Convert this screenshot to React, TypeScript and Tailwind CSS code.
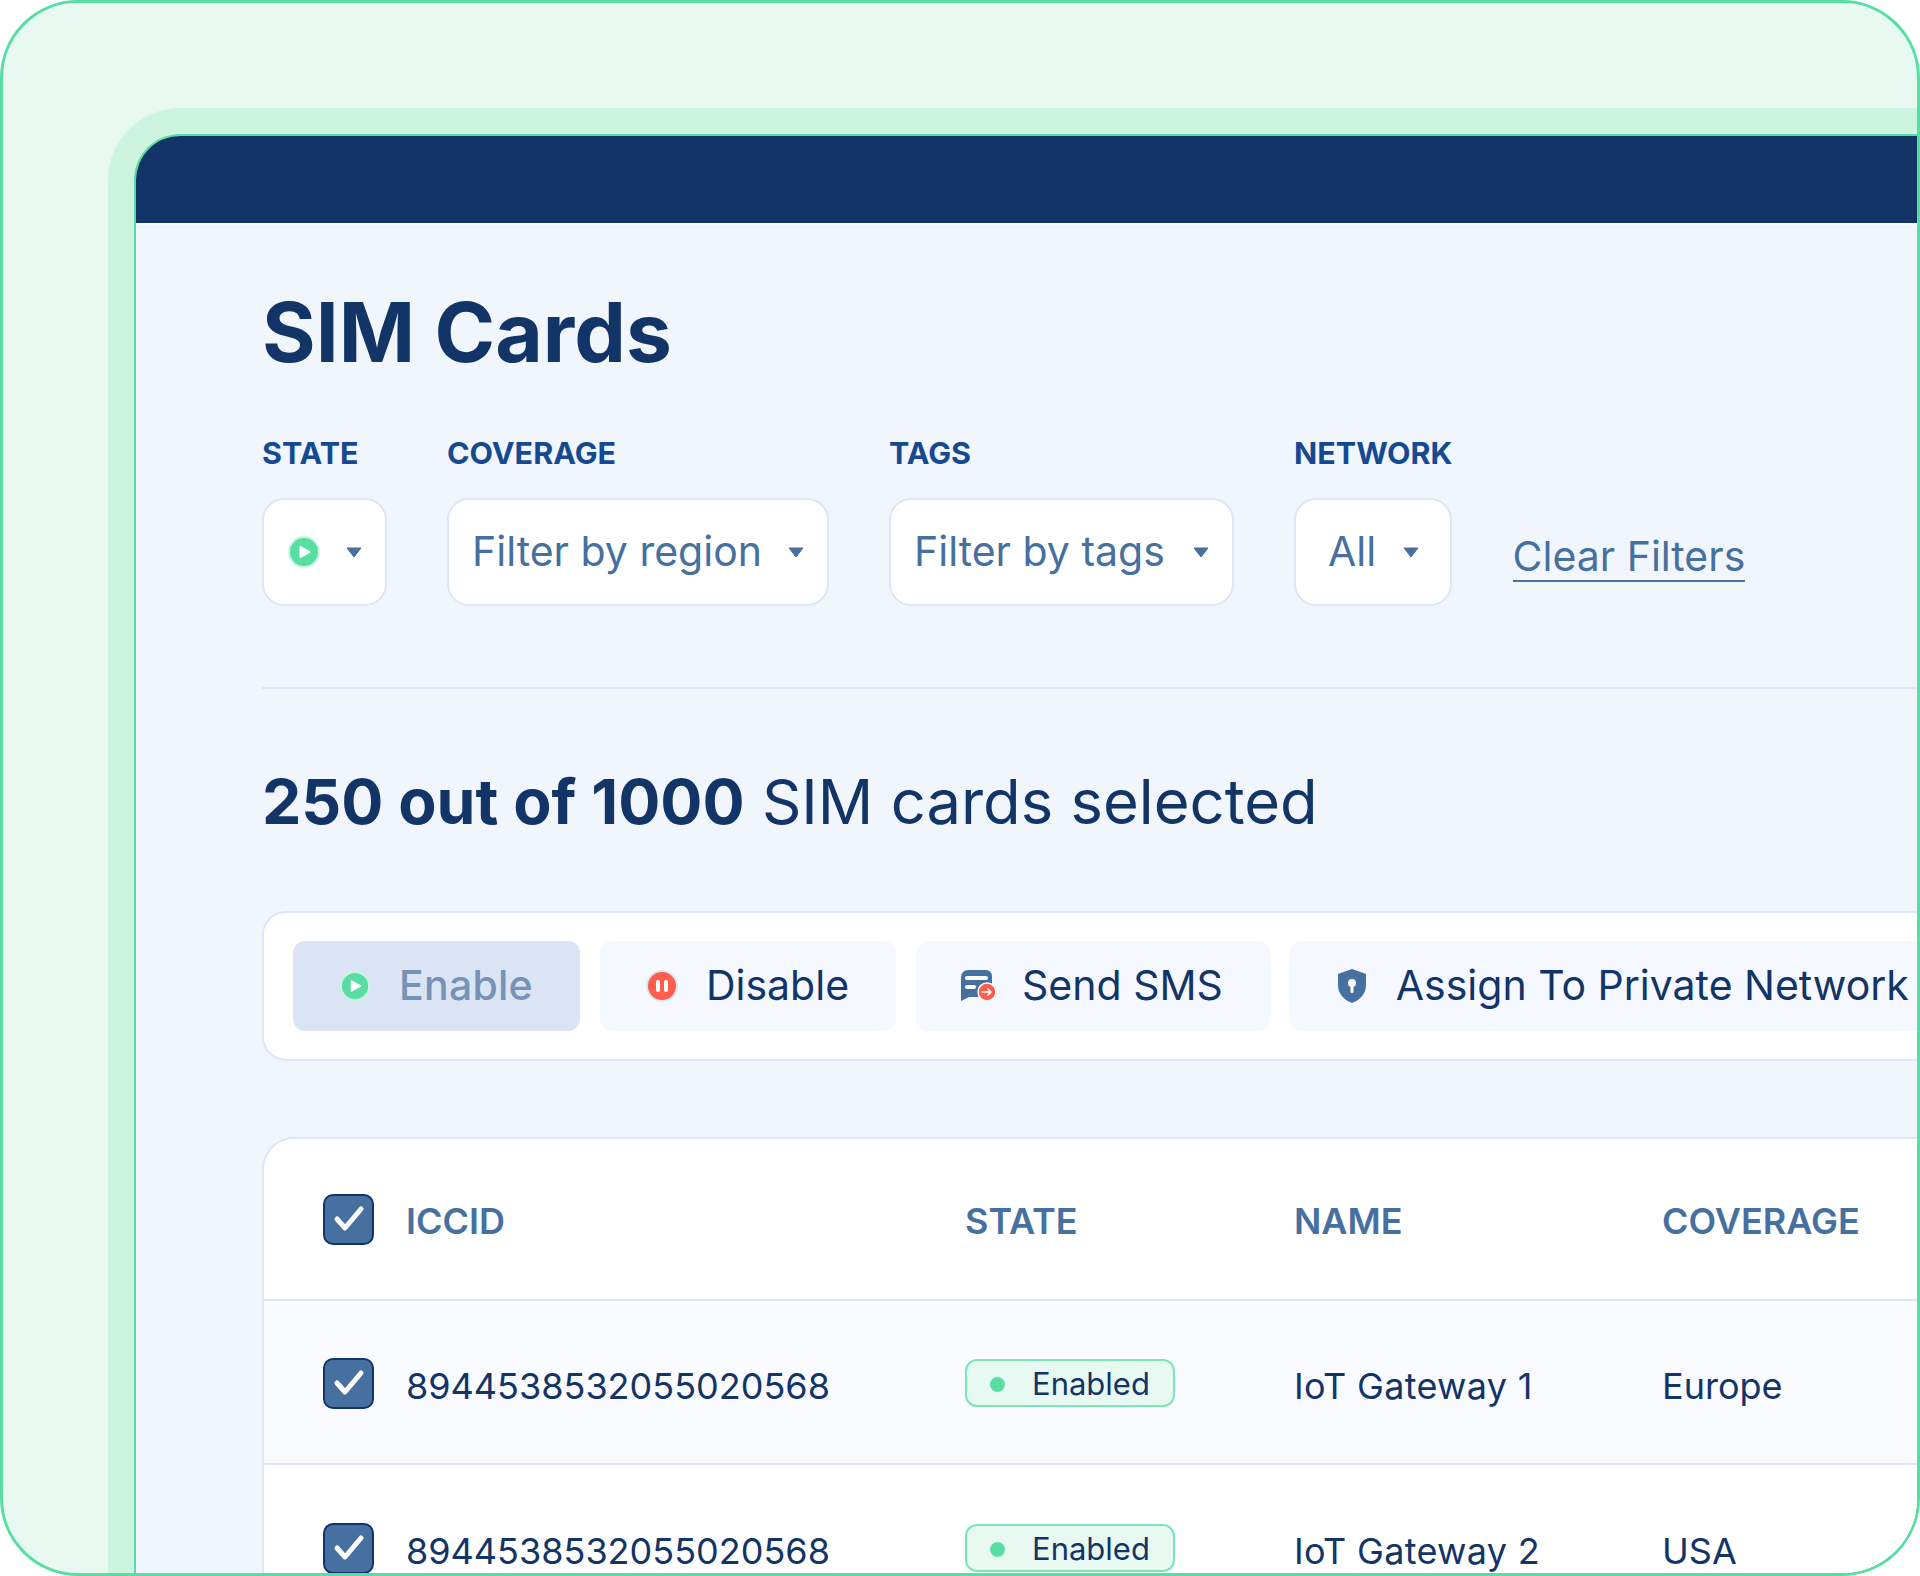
import { ReactNode } from "react";

const rows = [
  { iccid: "8944538532055020568", name: "IoT Gateway 1", coverage: "Europe", tint: true },
  { iccid: "8944538532055020568", name: "IoT Gateway 2", coverage: "USA", tint: false },
];

function PlayIcon({ size = 32 }: { size?: number }) {
  return (
    <svg width={size} height={size} viewBox="0 0 32 32" className="shrink-0">
      <circle cx="16" cy="16" r="15" fill="#58dea2" stroke="#ccf4e1" strokeWidth="2" />
      <path d="M12 10.2 L22.5 16 L12 21.8 Z" fill="#fff" stroke="#fff" strokeWidth="1" strokeLinejoin="round" />
    </svg>
  );
}

function PauseIcon() {
  return (
    <svg width="32" height="32" viewBox="0 0 32 32" className="shrink-0">
      <circle cx="16" cy="16" r="15" fill="#ff5e4d" stroke="#dce6f6" strokeWidth="2" />
      <rect x="10" y="10" width="4" height="12" rx="2" fill="#fff" />
      <rect x="18" y="10" width="4" height="12" rx="2" fill="#fff" />
    </svg>
  );
}

function SmsIcon() {
  return (
    <svg width="34" height="32" viewBox="0 0 34 32" className="shrink-0">
      <path d="M7 0 H25 A6 6 0 0 1 31 6 V23 A4 4 0 0 1 27 27 H8 L0 31 V7 A7 7 0 0 1 7 0 Z" fill="#46709f" />
      <rect x="4" y="6" width="23" height="4" rx="2" fill="#fff" />
      <rect x="4" y="15" width="11" height="4" rx="2" fill="#fff" />
      <circle cx="26" cy="22" r="9" fill="#ff5e4d" stroke="#fff" strokeWidth="1.5" />
      <path d="M21 22 H30 M27 19 L30 22 L27 25" fill="none" stroke="#fff" strokeWidth="1.6" strokeLinecap="round" strokeLinejoin="round" />
    </svg>
  );
}

function ShieldIcon() {
  return (
    <svg width="30" height="34" viewBox="0 0 30 34" className="shrink-0">
      <path d="M15 0 L29 5 V16 C29 25 23 31 15 34 C7 31 1 25 1 16 V5 Z" fill="#46709f" />
      <circle cx="15" cy="14" r="4" fill="#fff" />
      <rect x="13.5" y="15" width="3" height="9" rx="1.2" fill="#fff" />
    </svg>
  );
}

function Caret() {
  return (
    <svg width="16" height="11" viewBox="0 0 16 11" className="shrink-0">
      <path d="M1 1 H15 L8 10 Z" fill="#46709f" stroke="#46709f" strokeWidth="1" strokeLinejoin="round" />
    </svg>
  );
}

function Checkbox() {
  return (
    <div className="flex h-[51px] w-[51px] shrink-0 items-center justify-center rounded-[10px] border-2 border-[#12346a] bg-[#46709f]">
      <svg width="32" height="28" viewBox="0 0 32 28">
        <path d="M4 14 L12 23 L28 4" fill="none" stroke="#fff" strokeWidth="5" strokeLinecap="round" strokeLinejoin="round" />
      </svg>
    </div>
  );
}

function Filter({ label, width, children }: { label: string; width: string; children: ReactNode }) {
  return (
    <div className="flex flex-col">
      <div className="mb-[27px] text-[30.5px] leading-[36px] font-bold text-[#154a92]">{label}</div>
      <div className={`flex h-[108px] items-center justify-between rounded-[22px] border-2 border-[#dce6f6] bg-white text-[41px] text-[#46709f] ${width}`}>
        {children}
      </div>
    </div>
  );
}

function Action({ icon, label, active }: { icon: ReactNode; label: string; active?: boolean }) {
  return (
    <div className={`flex h-[90px] shrink-0 items-center gap-[29px] rounded-[12px] px-[47px] text-[41px] ${active ? "bg-[#dae4f4] font-medium tracking-[0.25px] text-[#7692b5]" : "bg-[#f5f8fe] text-[#133467]"}`}>
      <div className="flex w-[30px] justify-center">{icon}</div>
      <span>{label}</span>
    </div>
  );
}

function Row({ iccid, name, coverage, tint }: { iccid: string; name: string; coverage: string; tint: boolean }) {
  return (
    <div className={`grid h-[164px] grid-cols-[642px_329px_368px_1fr] items-center pl-[59px] pt-[2px] text-[36px] text-[#133467] ${tint ? "border-b-2 border-[#dce6f6] bg-[#fafbff]" : "bg-white"}`}>
      <div className="flex items-center gap-[32px]">
        <Checkbox />
        <span className="pt-[6px]">{iccid}</span>
      </div>
      <div>
        <div className="flex h-[48px] w-[210px] items-center gap-[27px] rounded-[12px] border-2 border-[#7ae6b5] bg-[#e8f9f1] pl-[23px] pt-[2px] text-[31px]">
          <span className="h-[15px] w-[15px] rounded-full bg-[#58dea2]" />
          Enabled
        </div>
      </div>
      <div className="pt-[6px] tracking-[0.3px]">{name}</div>
      <div className="pt-[6px]">{coverage}</div>
    </div>
  );
}

export default function App() {
  return (
    <div className="h-[1576px] w-[1920px] overflow-hidden rounded-[78px] border-[3px] border-[#58dea2] bg-[#e8f9f1] pl-[105px] pt-[105px] font-['Inter',sans-serif]">
      <div className="h-full rounded-tl-[72px] bg-[#ccf4e1] pl-[26px] pt-[26px]">
        <div className="h-[1500px] overflow-hidden rounded-tl-[46px] border-l-2 border-t-2 border-[#58dea2] bg-[#f1f6fd]">
          <div className="h-[89px] border-b-2 border-[#f8fafe] bg-[#133467]" />

          <div className="w-[1800px] pl-[126px]">
            <h1 className="mt-[60px] text-[82px] leading-[96px] font-bold text-[#133467]">SIM Cards</h1>

            <div className="mt-[54px] flex gap-[60px]">
              <Filter label="STATE" width="w-[125px] pl-[24px] pr-[23px]">
                <PlayIcon />
                <Caret />
              </Filter>
              <Filter label="COVERAGE" width="w-[382px] pl-[23px] pr-[23px]">
                <span>Filter by region</span>
                <Caret />
              </Filter>
              <Filter label="TAGS" width="w-[345px] pl-[23px] pr-[23px]">
                <span>Filter by tags</span>
                <Caret />
              </Filter>
              <Filter label="NETWORK" width="w-[158px] pl-[32px] pr-[31px]">
                <span>All</span>
                <Caret />
              </Filter>
              <a className="mt-[72px] self-center border-b-2 border-[#46709f] text-[41px] leading-[48px] text-[#46709f]">Clear Filters</a>
            </div>

            <div className="mt-[81px] h-[2px] bg-[#dce6f6]" />

            <div className="mt-[74px] text-[61.5px] leading-[76px] text-[#133467]">
              <span className="text-[62.5px] font-bold">250 out of 1000</span> SIM cards selected
            </div>

            <div className="mt-[71px] flex gap-[20px] rounded-[24px] border-2 border-[#dce6f6] bg-white px-[29px] py-[28px]">
              <Action icon={<PlayIcon size={30} />} label="Enable" active />
              <Action icon={<PauseIcon />} label="Disable" />
              <Action icon={<SmsIcon />} label="Send SMS" />
              <Action icon={<ShieldIcon />} label="Assign To Private Network" />
            </div>

            <div className="mt-[76px] overflow-hidden rounded-tl-[32px] border-l-2 border-t-2 border-[#dce6f6] bg-white">
              <div className="grid h-[162px] grid-cols-[642px_329px_368px_1fr] items-center border-b-2 border-[#dce6f6] pl-[59px] text-[36px] font-semibold text-[#46709f]">
                <div className="flex items-center gap-[32px]">
                  <Checkbox />
                  <span className="pt-[4px]">ICCID</span>
                </div>
                <div className="pt-[4px]">STATE</div>
                <div className="pt-[4px]">NAME</div>
                <div className="pt-[4px]">COVERAGE</div>
              </div>
              {rows.map((r) => (
                <Row key={r.name} {...r} />
              ))}
            </div>
          </div>
        </div>
      </div>
    </div>
  );
}
